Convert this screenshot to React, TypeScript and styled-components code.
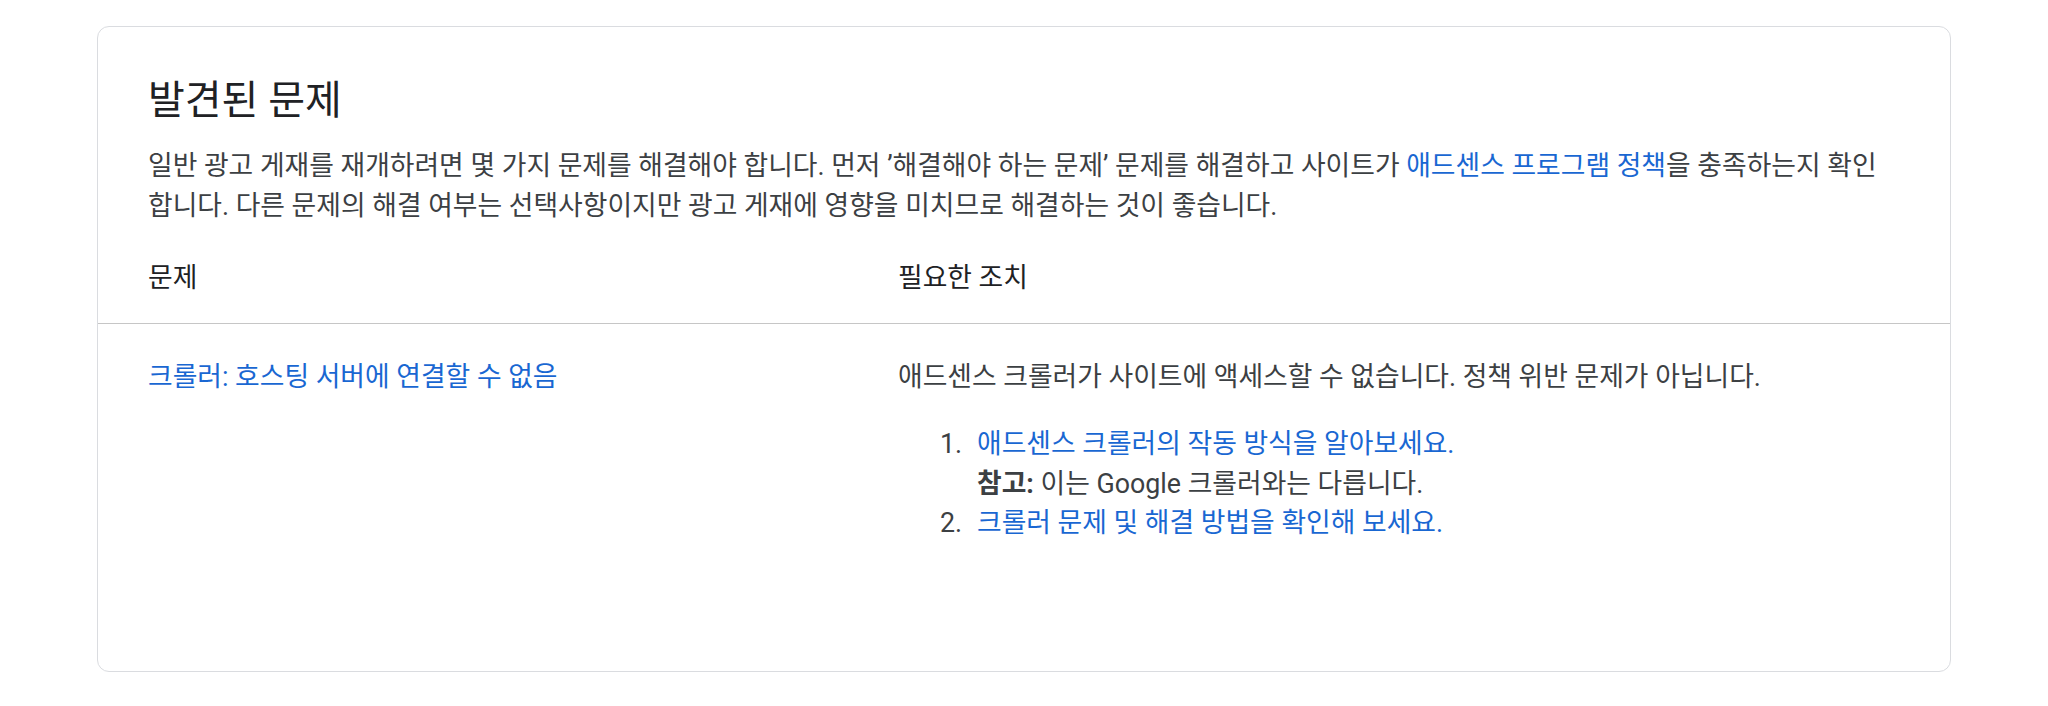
import styled, { createGlobalStyle } from 'styled-components';

const GlobalStyle = createGlobalStyle`
  html, body {
    margin: 0;
    padding: 0;
    background: #ffffff;
  }
  body {
    font-family: Roboto, "Noto Sans CJK KR", "Noto Sans", sans-serif;
    color: #3c4043;
    word-break: keep-all;
    -webkit-font-smoothing: antialiased;
  }
`;

const $Page = styled.div`
  padding: 26px 97px 36px;
`;

const _Card = styled.section`
  border: 1px solid #dadce0;
  border-radius: 12px;
  padding: 48px 0 127px;
  background: #ffffff;
`;

const _Intro = styled.div`
  padding: 0 50px;
`;

const _Title = styled.h2`
  margin: 0 0 20px;
  font-size: 40px;
  line-height: 52px;
  font-weight: 400;
  color: #202124;
`;

const _Text = styled.p`
  margin: 0;
  font-size: 26.8px;
  line-height: 39.5px;
`;

const _Link = styled.a`
  color: #1967d2;
  text-decoration: none;
  cursor: pointer;
`;

const _Row = styled.div<{ $head?: boolean }>`
  display: grid;
  grid-template-columns: 750px 1fr;
  padding: ${p => (p.$head ? '33px 24px 24px 50px' : '34px 24px 0 50px')};
  border-bottom: ${p => (p.$head ? '1px solid #c6c6c6' : 'none')};
  font-size: 26.8px;
  line-height: 39.5px;
  color: ${p => (p.$head ? '#202124' : '#3c4043')};
`;

const _Steps = styled.ol`
  margin: 28px 0 0;
  padding: 0 0 0 42px;
  list-style: none;
  counter-reset: step;
`;

const _Step = styled.li`
  display: grid;
  grid-template-columns: 37px 1fr;
  counter-increment: step;

  &::before {
    content: counter(step) '.';
    color: #3c4043;
  }
`;

const _StepBody = styled.div`
  display: flex;
  flex-direction: column;
`;

const _Note = styled.div`
  color: #3c4043;
`;

const _Strong = styled.strong`
  font-weight: 700;
  color: #3c4043;
`;

export default function App() {
  return (
    <>
      <GlobalStyle />
      <$Page>
        <_Card>
          <_Intro>
            <_Title>발견된 문제</_Title>
            <_Text>
              일반 광고 게재를 재개하려면 몇 가지 문제를 해결해야 합니다. 먼저 ’해결해야 하는 문제’ 문제를 해결하고 사이트가{' '}
              <_Link>애드센스 프로그램 정책</_Link>을 충족하는지 확인 합니다. 다른 문제의 해결 여부는 선택사항이지만 광고 게재에
              영향을 미치므로 해결하는 것이 좋습니다.
            </_Text>
          </_Intro>

          <_Row $head>
            <div>문제</div>
            <div>필요한 조치</div>
          </_Row>

          <_Row>
            <div>
              <_Link>크롤러: 호스팅 서버에 연결할 수 없음</_Link>
            </div>
            <div>
              <div>애드센스 크롤러가 사이트에 액세스할 수 없습니다. 정책 위반 문제가 아닙니다.</div>
              <_Steps>
                <_Step>
                  <_StepBody>
                    <_Link>애드센스 크롤러의 작동 방식을 알아보세요.</_Link>
                    <_Note>
                      <_Strong>참고:</_Strong> 이는 Google 크롤러와는 다릅니다.
                    </_Note>
                  </_StepBody>
                </_Step>
                <_Step>
                  <_StepBody>
                    <_Link>크롤러 문제 및 해결 방법을 확인해 보세요.</_Link>
                  </_StepBody>
                </_Step>
              </_Steps>
            </div>
          </_Row>
        </_Card>
      </$Page>
    </>
  );
}
